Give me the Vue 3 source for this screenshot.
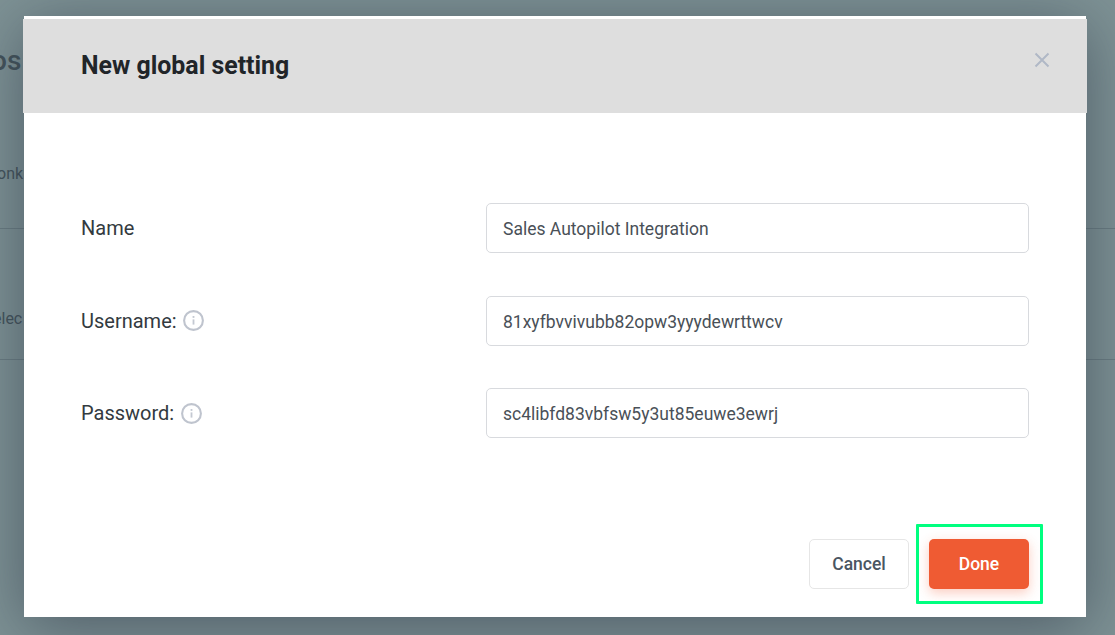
<script setup>
const fields = [
  { label: 'Name', value: 'Sales Autopilot Integration', info: false },
  { label: 'Username:', value: '81xyfbvvivubb82opw3yyydewrttwcv', info: true },
  { label: 'Password:', value: 'sc4libfd83vbfsw5y3ut85euwe3ewrj', info: true }
]
</script>

<template>
  <div class="page">
    <div class="backdrop">
      <div class="bg-title">os</div>
      <div class="bg-row first">onk</div>
      <div class="bg-row second">elec</div>
    </div>
    <div class="modal">
      <header class="head">
        <h2>New global setting</h2>
        <svg class="close" width="16" height="16" viewBox="0 0 16 16" aria-label="Close">
          <path d="M1.5 1.5 14.5 14.5M14.5 1.5 1.5 14.5" fill="none" stroke="#b0b8c6" stroke-width="2" />
        </svg>
      </header>
      <div class="form">
        <div v-for="f in fields" :key="f.label" class="row">
          <label class="label">
            {{ f.label }}
            <svg v-if="f.info" class="info" width="21" height="21" viewBox="0 0 21 21">
              <circle cx="10.5" cy="10.5" r="9.4" fill="none" stroke="#bfc4ce" stroke-width="2.1" />
              <rect x="9.6" y="6" width="1.8" height="1.9" fill="#c4c9d2" />
              <rect x="9.6" y="9.4" width="1.8" height="5.2" fill="#c4c9d2" />
            </svg>
          </label>
          <div class="input">{{ f.value }}</div>
        </div>
      </div>
      <footer class="foot">
        <button class="btn cancel">Cancel</button>
        <button class="btn done">Done</button>
      </footer>
    </div>
    <div class="highlight"></div>
  </div>
</template>

<style scoped>
.page {
  position: relative;
  width: 1115px;
  height: 635px;
  overflow: hidden;
  box-sizing: border-box;
  padding: 16px 29px 18px 24px;
  font-family: Roboto, "Liberation Sans", sans-serif;
  background: #7e9295;
}
.backdrop {
  position: absolute;
  inset: 0;
  color: #43535a;
  font-size: 16px;
}
.bg-title {
  height: 120px;
  box-sizing: border-box;
  padding-top: 46px;
  margin-left: -9px;
  font-size: 28px;
  font-weight: 500;
  line-height: 30px;
}
.bg-row {
  box-sizing: border-box;
  border-bottom: 1px solid rgba(60, 75, 85, 0.3);
  margin-left: -3px;
}
.bg-row.first {
  height: 109px;
  padding-top: 44px;
  line-height: 20px;
}
.bg-row.second {
  height: 131px;
  padding-top: 80px;
  line-height: 20px;
  margin-left: -7px;
}
.modal {
  position: relative;
  height: 601px;
  background: #fff;
  display: flex;
  flex-direction: column;
  box-shadow: 0 10px 60px rgba(40, 50, 65, 0.55);
}
.head {
  margin: 3px -1px 0;
  height: 94px;
  background: #dedede;
  display: flex;
  justify-content: space-between;
  padding: 0 37px 0 58px;
  align-items: flex-start;
}
.head h2 {
  margin: 32px 0 0;
  font-size: 24.9px;
  line-height: 30px;
  font-weight: 700;
  color: #212529;
  letter-spacing: 0;
}
.close {
  margin-top: 33px;
}
.form {
  padding: 90px 57px 0;
  display: flex;
  flex-direction: column;
  gap: 42.5px;
}
.row {
  display: flex;
  align-items: center;
  height: 50px;
}
.label {
  width: 405px;
  display: flex;
  align-items: center;
  gap: 6.5px;
  font-size: 20px;
  color: #333a40;
}
.info {
  display: block;
}
.input {
  flex: 1;
  height: 50px;
  box-sizing: border-box;
  border: 1px solid #d8dade;
  border-radius: 5px;
  padding: 0 16px;
  font-size: 17.5px;
  line-height: 50px;
  color: #495057;
}
.foot {
  margin-top: auto;
  padding: 0 57px 28px 0;
  display: flex;
  justify-content: flex-end;
  gap: 20px;
}
.btn {
  width: 100px;
  height: 50px;
  border-radius: 5px;
  font-family: inherit;
  font-size: 17.5px;
  font-weight: 500;
  padding: 0;
}
.cancel {
  background: #fff;
  border: 1px solid #e6e6e6;
  color: #4a5561;
}
.done {
  background: #ef5b33;
  border: 0;
  color: #fff;
  box-shadow: 0 4px 12px rgba(241, 91, 50, 0.3);
}
.highlight {
  position: absolute;
  left: 916px;
  top: 524px;
  width: 127px;
  height: 80px;
  box-sizing: border-box;
  border: 3px solid #00ff7f;
  border-radius: 1px;
}
</style>
